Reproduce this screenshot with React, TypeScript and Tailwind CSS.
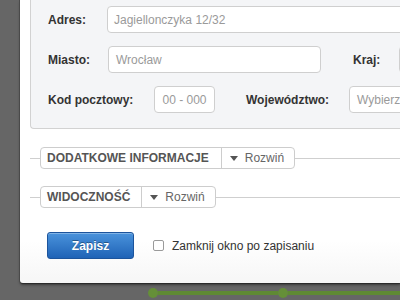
import React from "react";

function Caret() {
  return (
    <svg width="8" height="5" viewBox="0 0 8 5" className="shrink-0">
      <path d="M0 0 L8 0 L4 5 Z" fill="#555" />
    </svg>
  );
}

function Section({ title, leftPr }: { title: string; leftPr: string }) {
  return (
    <div className="flex items-center h-[22px]">
      <div className="w-[10px] h-px bg-[#cfcfcf] shrink-0" />
      <div className="flex h-[22px] border border-[#cdcdcd] rounded-[4px] bg-white shrink-0">
        <div className={`flex items-center pl-[6px] ${leftPr} text-[12px] font-bold text-[#555]`}>
          {title}
        </div>
        <div className="flex items-center gap-[7px] border-l border-[#cdcdcd] pl-[8px] pr-[10px] text-[12px] text-[#666]">
          <Caret />
          <span>Rozwiń</span>
        </div>
      </div>
      <div className="flex-1 h-px bg-[#cfcfcf]" />
    </div>
  );
}

export default function App() {
  return (
    <div className="w-[400px] h-[300px] overflow-hidden flex flex-col bg-[#666666] font-['Liberation_Sans',Arial,sans-serif]">
      <div className="h-[283px] shrink-0 ml-[20px] bg-gradient-to-b from-white from-85% to-[#f6f6f6] rounded-bl-[3px] shadow-[-1px_0_0_#4a4a4a,0_1px_1px_#2a2a2a,0_2px_3px_rgba(0,0,0,0.4)] overflow-hidden pl-[10px] flex flex-col">
        <div className="w-[420px] h-[129px] shrink-0 bg-[#f4f5f7] border-l border-b border-[#d2d2d2] rounded-bl-[4px] pt-[6px] pl-[17px] flex flex-col gap-[13px]">
          <div className="flex items-center h-[27px]">
            <span className="w-[59px] shrink-0 text-[12px] font-bold text-[#333]">Adres:</span>
            <div className="w-[320px] shrink-0 h-[27px] border border-[#cfcfcf] rounded-[4px] bg-white pl-[6px] flex items-center text-[12px] text-[#9a9a9a]">
              Jagiellonczyka 12/32
            </div>
          </div>
          <div className="flex items-center h-[27px]">
            <span className="w-[60px] shrink-0 text-[12px] font-bold text-[#333]">Miasto:</span>
            <div className="w-[213px] shrink-0 h-[27px] border border-[#cfcfcf] rounded-[4px] bg-white pl-[7px] flex items-center text-[12px] text-[#9a9a9a]">
              Wrocław
            </div>
            <span className="ml-[32px] w-[46px] shrink-0 text-[12px] font-bold text-[#333]">Kraj:</span>
            <div className="w-[100px] shrink-0 h-[27px] border border-[#cfcfcf] rounded-[4px] bg-white" />
          </div>
          <div className="flex items-center h-[27px]">
            <span className="w-[106px] shrink-0 text-[12px] font-bold text-[#333]">Kod pocztowy:</span>
            <div className="w-[61px] shrink-0 h-[27px] border border-[#cfcfcf] rounded-[4px] bg-white flex items-center justify-center text-[12px] text-[#9a9a9a]">
              00 - 000
            </div>
            <span className="ml-[31px] w-[103px] shrink-0 text-[12px] font-bold text-[#333]">Województwo:</span>
            <div className="w-[100px] shrink-0 h-[27px] border border-[#cfcfcf] rounded-[4px] bg-white pl-[7px] flex items-center text-[12px] text-[#9a9a9a]">
              Wybierz
            </div>
          </div>
        </div>

        <div className="mt-[18px] flex flex-col gap-[17px]">
          <Section title="DODATKOWE INFORMACJE" leftPr="pr-[12px]" />
          <Section title="WIDOCZNOŚĆ" leftPr="pr-[11px]" />
        </div>

        <div className="mt-[24px] ml-[17px] flex items-center">
          <button className="w-[87px] h-[27px] rounded-[3px] border border-[#1c549c] bg-gradient-to-b from-[#4a93dc] to-[#1f63b6] text-white text-[12px] font-bold [text-shadow:0_-1px_0_rgba(0,0,0,0.35)] shadow-[inset_0_1px_0_rgba(255,255,255,0.3)]">
            Zapisz
          </button>
          <div className="ml-[19px] w-[11px] h-[11px] border border-[#9a9a9a] rounded-[2px] bg-white" />
          <span className="ml-[8px] text-[12px] text-[#333]">Zamknij okno po zapisaniu</span>
        </div>
      </div>

      <div className="flex-1 flex items-start pt-[5px] pl-[148px]">
        <div className="flex items-center">
          <div className="w-[10px] h-[10px] rounded-full bg-[#658f38]" />
          <div className="w-[120px] h-[4px] bg-[#5f8a33]" />
          <div className="w-[10px] h-[10px] rounded-full bg-[#658f38]" />
          <div className="w-[120px] h-[4px] bg-[#5f8a33]" />
        </div>
      </div>
    </div>
  );
}
